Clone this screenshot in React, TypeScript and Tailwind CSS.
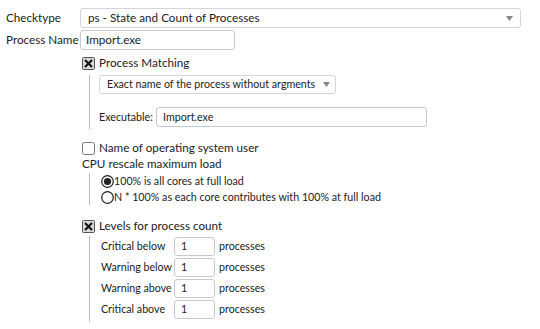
import React from "react";

const Tri = () => (
  <svg width="7" height="5" viewBox="0 0 7 5" className="shrink-0">
    <path d="M0 0 L7 0 L3.5 5 Z" fill="#888" />
  </svg>
);

const CheckX = () => (
  <svg width="13" height="13" viewBox="0 0 13 13" className="shrink-0">
    <rect x="0.5" y="0.5" width="12" height="12" rx="1" fill="#d8d8d8" stroke="#555" />
    <path d="M3 3 L10 10 M10 3 L3 10" stroke="#111" strokeWidth="2.1" />
  </svg>
);

const CheckEmpty = () => (
  <svg width="13" height="13" viewBox="0 0 13 13" className="shrink-0">
    <rect x="0.5" y="0.5" width="12" height="12" rx="2" fill="#fff" stroke="#777" />
  </svg>
);

const Radio = ({ on }: { on?: boolean }) => (
  <svg width="13" height="13" viewBox="0 0 13 13" className="shrink-0">
    <circle cx="6.5" cy="6.5" r="5.8" fill="#fff" stroke="#222" strokeWidth="1.2" />
    {on && <circle cx="6.5" cy="6.5" r="3.6" fill="#222" />}
  </svg>
);

export default function App() {
  const levels = ["Critical below", "Warning below", "Warning above", "Critical above"];
  return (
    <div
      className="w-[540px] h-[329px] bg-white text-[#222] overflow-hidden whitespace-nowrap"
      style={{ fontFamily: "Lato, 'Open Sans', sans-serif" }}
    >
      <div className="flex items-center pt-[8px]">
        <div className="w-[80px] shrink-0 pl-[6px] text-[11.7px]">Checktype</div>
        <div className="w-[441px] h-[20px] border border-[#d4d4dc] rounded-[3px] flex items-center justify-between pl-[7px] pr-[7px]">
          <span className="text-[11.7px]">ps - State and Count of Processes</span>
          <Tri />
        </div>
      </div>
      <div className="flex items-center mt-[2px]">
        <div className="w-[80px] shrink-0 pl-[6px] text-[11.7px]">Process Name</div>
        <div className="w-[155px] h-[20px] border border-[#c8c8d4] rounded-[3px] flex items-center pl-[5px] text-[11.7px]">
          Import.exe
        </div>
      </div>

      <div className="pl-[82px]">
        <div className="flex items-center gap-[4px] mt-[6px] h-[14px]">
          <CheckX />
          <span className="text-[11.7px]">Process Matching</span>
        </div>
        <div className="ml-[7px] mt-[5px] border-l border-[#bbb] pl-[9px] pb-[2px]">
          <div className="w-[237px] h-[19px] border border-[#d4d4dc] rounded-[3px] flex items-center justify-between pl-[7px] pr-[5px]">
            <span className="text-[10.7px]">Exact name of the process without argments</span>
            <Tri />
          </div>
          <div className="flex items-center mt-[13px]">
            <span className="text-[10.7px] w-[57px] shrink-0">Executable:</span>
            <div className="w-[271px] h-[20px] border border-[#c8c8d4] rounded-[3px] flex items-center pl-[6px] text-[10.7px]">
              Import.exe
            </div>
          </div>
        </div>

        <div className="flex items-center gap-[4px] mt-[12px] h-[14px]">
          <CheckEmpty />
          <span className="text-[11.7px]">Name of operating system user</span>
        </div>
        <div className="h-[15px] flex items-center mt-[1px] text-[11.7px]">CPU rescale maximum load</div>
        <div className="ml-[7px] mt-[2px] border-l border-[#bbb] pl-[11px]">
          <div className="flex items-center h-[16px] text-[10.7px]">
            <Radio on />
            <span>100% is all cores at full load</span>
          </div>
          <div className="flex items-center h-[16px] text-[10.7px]">
            <Radio />
            <span>N * 100% as each core contributes with 100% at full load</span>
          </div>
        </div>

        <div className="flex items-center gap-[4px] mt-[14px] h-[14px]">
          <CheckX />
          <span className="text-[11.7px]">Levels for process count</span>
        </div>
        <div className="ml-[7px] mt-[3px] border-l border-[#bbb] pl-[11px] pb-[2px]">
          {levels.map((l) => (
            <div key={l} className="flex items-center h-[21px] text-[10.7px]">
              <span className="w-[73px] shrink-0">{l}</span>
              <div className="w-[41px] h-[19px] border border-[#c8c8d4] rounded-[3px] flex items-center pl-[6px]">1</div>
              <span className="ml-[4px]">processes</span>
            </div>
          ))}
        </div>
      </div>
    </div>
  );
}
